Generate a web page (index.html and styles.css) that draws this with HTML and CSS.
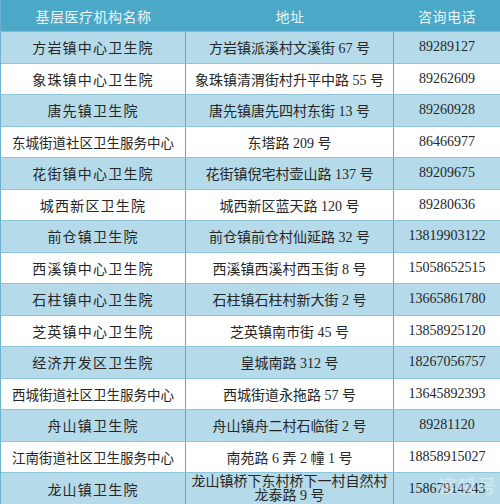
FILE: index.html
```html
<!DOCTYPE html>
<html lang="zh">
<head>
<meta charset="utf-8">
<link rel="stylesheet" href="styles.css">
</head>
<body>
<div class="page">
  <div class="table">
    <div class="row head">
      <div class="cell">基层医疗机构名称</div>
      <div class="cell">地址</div>
      <div class="cell">咨询电话</div>
    </div>
    <div class="row blue">
      <div class="cell name">方岩镇中心卫生院</div>
      <div class="cell">方岩镇派溪村文溪街 67 号</div>
      <div class="cell">89289127</div>
    </div>
    <div class="row">
      <div class="cell name">象珠镇中心卫生院</div>
      <div class="cell">象珠镇清渭街村升平中路 55 号</div>
      <div class="cell">89262609</div>
    </div>
    <div class="row blue">
      <div class="cell name">唐先镇卫生院</div>
      <div class="cell">唐先镇唐先四村东街 13 号</div>
      <div class="cell">89260928</div>
    </div>
    <div class="row">
      <div class="cell name long">东城街道社区卫生服务中心</div>
      <div class="cell">东塔路 209 号</div>
      <div class="cell">86466977</div>
    </div>
    <div class="row blue">
      <div class="cell name">花街镇中心卫生院</div>
      <div class="cell">花街镇倪宅村壶山路 137 号</div>
      <div class="cell">89209675</div>
    </div>
    <div class="row">
      <div class="cell name">城西新区卫生院</div>
      <div class="cell">城西新区蓝天路 120 号</div>
      <div class="cell">89280636</div>
    </div>
    <div class="row blue">
      <div class="cell name">前仓镇卫生院</div>
      <div class="cell">前仓镇前仓村仙延路 32 号</div>
      <div class="cell">13819903122</div>
    </div>
    <div class="row">
      <div class="cell name">西溪镇中心卫生院</div>
      <div class="cell">西溪镇西溪村西玉街 8 号</div>
      <div class="cell">15058652515</div>
    </div>
    <div class="row blue">
      <div class="cell name">石柱镇中心卫生院</div>
      <div class="cell">石柱镇石柱村新大街 2 号</div>
      <div class="cell">13665861780</div>
    </div>
    <div class="row">
      <div class="cell name">芝英镇中心卫生院</div>
      <div class="cell">芝英镇南市街 45 号</div>
      <div class="cell">13858925120</div>
    </div>
    <div class="row blue">
      <div class="cell name">经济开发区卫生院</div>
      <div class="cell">皇城南路 312 号</div>
      <div class="cell">18267056757</div>
    </div>
    <div class="row">
      <div class="cell name long">西城街道社区卫生服务中心</div>
      <div class="cell">西城街道永拖路 57 号</div>
      <div class="cell">13645892393</div>
    </div>
    <div class="row blue">
      <div class="cell name">舟山镇卫生院</div>
      <div class="cell">舟山镇舟二村石临街 2 号</div>
      <div class="cell">89281120</div>
    </div>
    <div class="row">
      <div class="cell name long">江南街道社区卫生服务中心</div>
      <div class="cell">南苑路 6 弄 2 幢 1 号</div>
      <div class="cell">18858915027</div>
    </div>
    <div class="row blue last">
      <div class="cell name">龙山镇卫生院</div>
      <div class="cell two">龙山镇桥下东村桥下一村自然村<br>龙泰路 9 号</div>
      <div class="cell">15867914243</div>
    </div>
  </div>
  <div class="mark">搜狐号</div>
</div>
</body>
</html>
```

FILE: styles.css
```css
html, body {
  margin: 0;
  padding: 0;
  background: #ffffff;
}

.page {
  position: relative;
  width: 500px;
  height: 504px;
  overflow: hidden;
}

.table {
  display: flex;
  flex-direction: column;
  width: 500px;
  border-left: 1px solid #6fb2d0;
  box-sizing: border-box;
}

.row {
  display: grid;
  grid-template-columns: 185px 208px 106px;
  height: 31.5px;
  box-sizing: border-box;
  border-bottom: 1px solid #8fc3d9;
  background: #ffffff;
  font-family: "Liberation Serif", "Noto Sans CJK SC", serif;
  font-size: 14px;
  color: #262626;
}

.row.blue {
  background: #b5dbea;
}

.row.head {
  height: 32px;
  background: #4ba8c6;
  border-bottom: 1px solid #7fbdd6;
  font-family: "Noto Sans CJK SC", sans-serif;
  font-size: 14px;
  color: #e9f6fb;
  letter-spacing: 0.5px;
}

.row.head .cell {
  border-right: none;
}

.row.last {
  height: 32px;
  border-bottom: none;
}

.cell {
  display: flex;
  align-items: center;
  justify-content: center;
  text-align: center;
  border-right: 1px solid #5ea6cd;
  overflow: hidden;
  white-space: nowrap;
}

.cell:last-child {
  border-right: none;
}

.cell.name {
  letter-spacing: 1.2px;
}

.cell.name.long {
  letter-spacing: 0;
  font-size: 13.5px;
}

.cell.two {
  line-height: 14px;
  white-space: normal;
  align-items: flex-start;
  padding-top: 2px;
}

.mark {
  position: absolute;
  right: 2px;
  bottom: 6px;
  font-family: "Noto Sans CJK SC", sans-serif;
  font-size: 18px;
  color: rgba(255, 255, 255, 0.45);
  letter-spacing: 2px;
}
```
